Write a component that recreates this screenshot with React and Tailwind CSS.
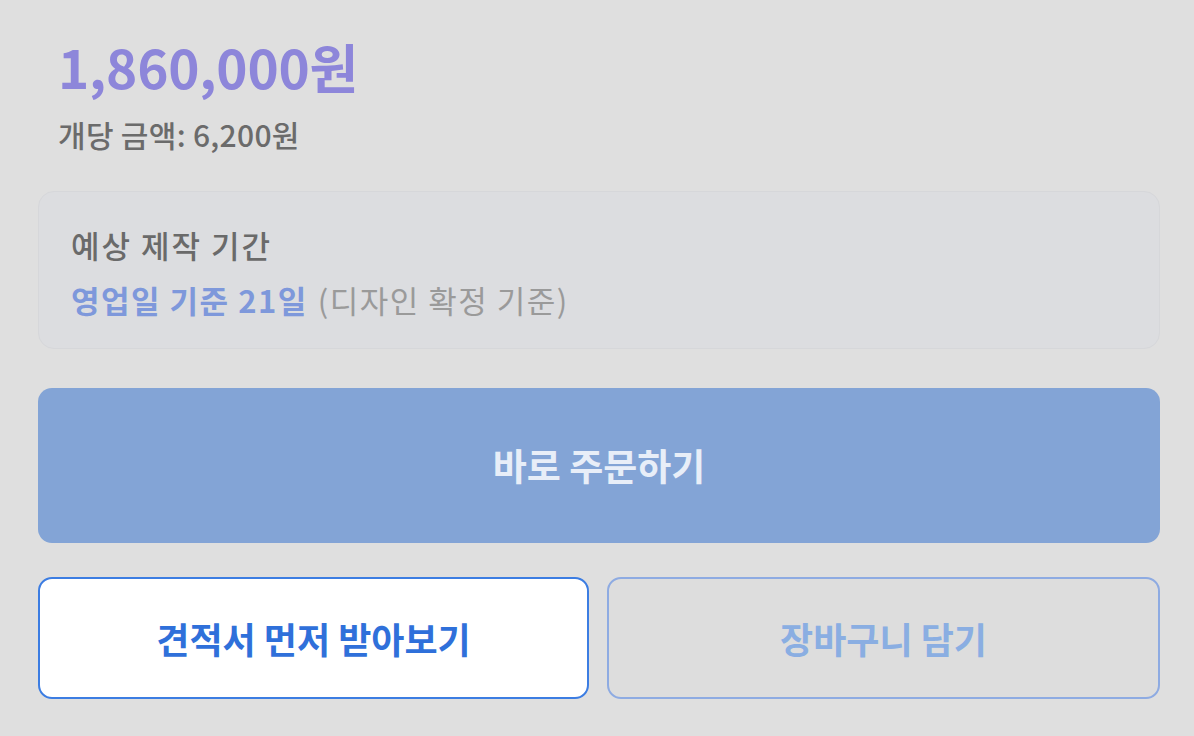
import React from 'react';

const App = () => (
  <div
    className="w-[1194px] h-[736px] bg-[#dfdfdf] pl-[38px] pr-[34px] pt-[30px]"
    style={{ fontFamily: '"Noto Sans CJK KR", "Noto Sans", sans-serif' }}
  >
    <div className="pl-[20px]">
      <div className="text-[53px] leading-[72px] font-bold text-[#8d86da] tracking-[-0.2px]">1,860,000원</div>
      <div className="mt-[12px] text-[30px] leading-[40px] font-medium text-[#6b6b6b] tracking-[0.3px]">개당 금액: 6,200원</div>
    </div>

    <div className="mt-[37px] h-[158px] rounded-[16px] border border-[#d6d7da] bg-[#dcdde0] px-[32px] pt-[31px]">
      <div className="text-[31px] leading-[44px] font-medium text-[#6a6a6a] tracking-[2px]">예상 제작 기간</div>
      <div className="mt-[13px] text-[31px] leading-[40px] tracking-[1.5px]">
        <span className="font-bold text-[#7e98db]">영업일 기준 21일</span>
        <span className="ml-[10px] text-[#9a9a9a]">(디자인 확정 기준)</span>
      </div>
    </div>

    <button className="mt-[39px] flex h-[155px] w-full items-center justify-center rounded-[14px] bg-[#83a4d6] text-[37px] font-bold text-[#e8eef8]">
      바로 주문하기
    </button>

    <div className="mt-[34px] flex gap-[18px]">
      <button className="flex h-[122px] w-[551px] items-center justify-center rounded-[14px] border-2 border-[#3c7de2] bg-white text-[36px] font-bold text-[#2f70da]">
        견적서 먼저 받아보기
      </button>
      <button className="flex h-[122px] flex-1 items-center justify-center rounded-[14px] border-2 border-[#8eabe2] bg-[#dddddd] text-[36px] font-bold text-[#8aaee2]">
        장바구니 담기
      </button>
    </div>
  </div>
);

export default App;
